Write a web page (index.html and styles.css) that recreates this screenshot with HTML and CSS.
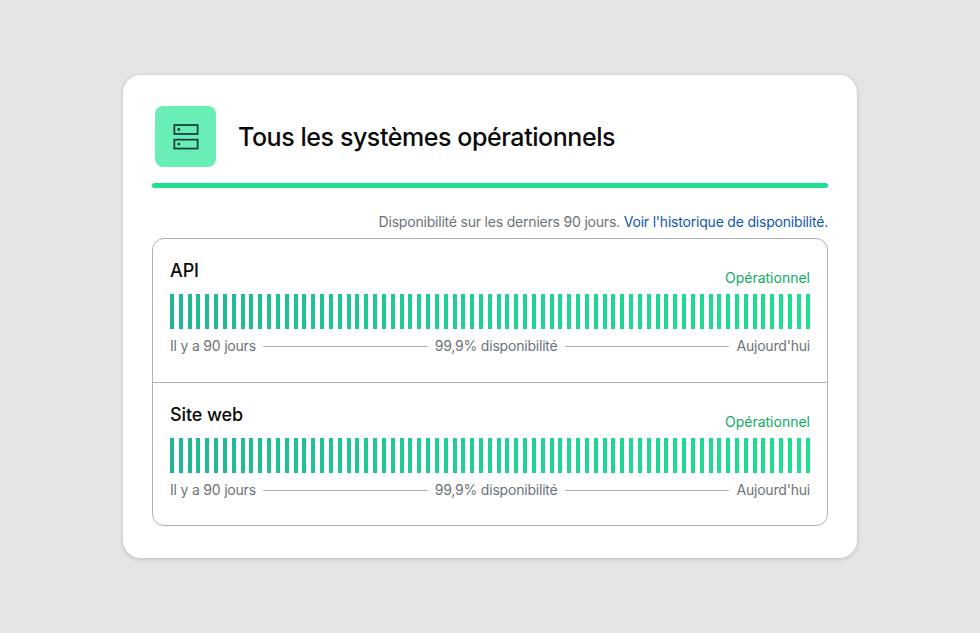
FILE: index.html
```html
<!DOCTYPE html>
<html lang="fr">
<head>
<meta charset="utf-8">
<title>Statut</title>
<link rel="stylesheet" href="styles.css">
</head>
<body>
<main class="card">
  <header class="head">
    <div class="tile">
      <svg class="tile-icon" width="26" height="26" viewBox="0 0 26 26" fill="none" stroke="#12373a" stroke-width="1.7">
        <rect x="1.35" y="1.05" width="23.3" height="8.9"/>
        <rect x="1.35" y="15.65" width="23.3" height="8.9"/>
        <circle cx="5.8" cy="5.5" r="1.4" fill="#12373a" stroke="none"/>
        <circle cx="5.8" cy="20.1" r="1.4" fill="#12373a" stroke="none"/>
      </svg>
    </div>
    <h1 class="title">Tous les systèmes opérationnels</h1>
  </header>
  <div class="status-line"></div>
  <p class="note">Disponibilité sur les derniers 90 jours. <a class="link" href="#">Voir l'historique de disponibilité.</a></p>
  <section class="panel">
    <article class="row">
      <div class="row-head"><h2 class="name">API</h2><span class="state">Opérationnel</span></div>
      <div class="bars"><i></i><i></i><i></i><i></i><i></i><i></i><i></i><i></i><i></i><i></i><i></i><i></i><i></i><i></i><i></i><i></i><i></i><i></i><i></i><i></i><i></i><i></i><i></i><i></i><i></i><i></i><i></i><i></i><i></i><i></i><i></i><i></i><i></i><i></i><i></i><i></i><i></i><i></i><i></i><i></i><i></i><i></i><i></i><i></i><i></i><i></i><i></i><i></i><i></i><i></i><i></i><i></i><i></i><i></i><i></i><i></i><i></i><i></i><i></i><i></i><i></i><i></i><i></i><i></i><i></i><i></i><i></i><i></i><i></i><i></i><i></i><i></i><i></i></div>
      <div class="legend"><span>Il y a 90 jours</span><span class="rule"></span><span>99,9% disponibilité</span><span class="rule"></span><span>Aujourd'hui</span></div>
    </article>
    <article class="row">
      <div class="row-head"><h2 class="name">Site web</h2><span class="state">Opérationnel</span></div>
      <div class="bars"><i></i><i></i><i></i><i></i><i></i><i></i><i></i><i></i><i></i><i></i><i></i><i></i><i></i><i></i><i></i><i></i><i></i><i></i><i></i><i></i><i></i><i></i><i></i><i></i><i></i><i></i><i></i><i></i><i></i><i></i><i></i><i></i><i></i><i></i><i></i><i></i><i></i><i></i><i></i><i></i><i></i><i></i><i></i><i></i><i></i><i></i><i></i><i></i><i></i><i></i><i></i><i></i><i></i><i></i><i></i><i></i><i></i><i></i><i></i><i></i><i></i><i></i><i></i><i></i><i></i><i></i><i></i><i></i><i></i><i></i><i></i><i></i><i></i></div>
      <div class="legend"><span>Il y a 90 jours</span><span class="rule"></span><span>99,9% disponibilité</span><span class="rule"></span><span>Aujourd'hui</span></div>
    </article>
  </section>
</main>
</body>
</html>
```
FILE: styles.css
```css
* { box-sizing: border-box; }
html, body { height: 100%; }
body {
  margin: 0;
  background: #e6e5e3;
  display: flex;
  align-items: center;
  justify-content: center;
  font-family: Inter, "Liberation Sans", sans-serif;
}
.card {
  width: 734px;
  height: 483px;
  background: #fff;
  border-radius: 18px;
  padding: 31px 29px 32px;
  box-shadow: 0 1px 4px rgba(0, 0, 0, 0.18);
}
.head { display: flex; align-items: center; gap: 22px; padding-left: 3px; }
.tile {
  width: 61px;
  height: 61px;
  background: #69efb6;
  border-radius: 8px;
  display: flex;
  align-items: center;
  justify-content: center;
}
.title { margin: 0; font-size: 25px; font-weight: 500; letter-spacing: -0.43px; color: #0a0a0a; }
.status-line { height: 5px; margin-top: 16px; background: #1ee08f; border-radius: 3px; }
.note { margin: 25px 0 7px; text-align: right; font-size: 14px; letter-spacing: -0.2px; line-height: 18px; color: #6b7378; }
.link { color: #0f56b3; text-decoration: none; }
.panel { border: 1px solid #a9b3ba; border-radius: 12px; height: 288px; }
.row { height: 143px; padding: 20px 17px 0; }
.row + .row { border-top: 1px solid #a9b3ba; height: 144px; }
.row-head { display: flex; justify-content: space-between; align-items: flex-end; height: 34px; }
.name { margin: 0; font-size: 18px; font-weight: 500; line-height: 24px; letter-spacing: -0.1px; align-self: flex-start; color: #0a0a0a; }
.state { font-size: 14px; line-height: 18px; color: #0bab64; margin-bottom: 6px; }
.bars { display: flex; justify-content: space-between; height: 35px; margin-top: 1px; }
.bars i {
  width: 4px;
  background: linear-gradient(90deg, #22b696 170px, #1fd196 490px, #1ddf8e 810px) fixed;
}
.legend { display: flex; align-items: center; gap: 7px; margin-top: 8px; font-size: 14px; letter-spacing: -0.2px; line-height: 18px; color: #6b7378; }
.rule { flex: 1; height: 1px; background: #a9b3ba; }
```
